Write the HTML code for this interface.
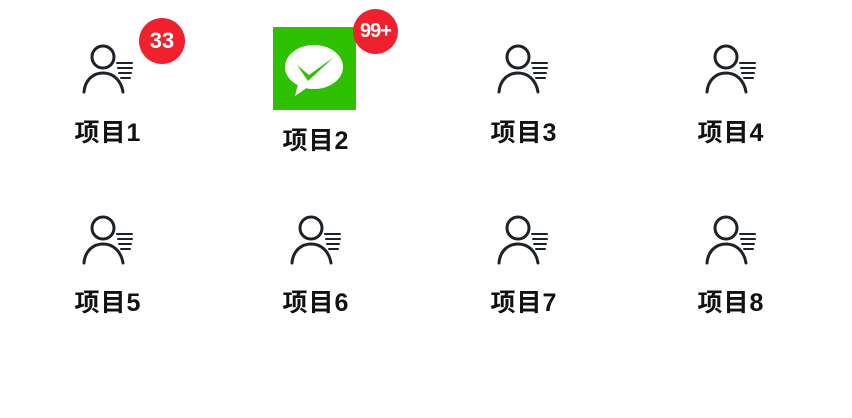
<!DOCTYPE html>
<html><head><meta charset="utf-8"><style>
html,body{margin:0;padding:0;background:#fff;width:852px;height:418px;overflow:hidden;position:relative}
.ic{position:absolute;}
.lbl{position:absolute;width:160px;text-align:center;font-family:"Liberation Sans","Noto Sans CJK SC",sans-serif;font-weight:bold;font-size:25px;letter-spacing:1px;color:#111;line-height:26px}
.badge{position:absolute;border-radius:50%;background:#f0202c;color:#fff;font-family:"Liberation Sans",sans-serif;font-weight:bold;text-align:center}
</style></head><body>
<svg width="0" height="0" style="position:absolute"><defs>
<g id="p" fill="none" stroke="#1d2228" stroke-linecap="round">
<circle cx="21" cy="15" r="11" stroke-width="3"/>
<path d="M2 50 C3 38 11 31 21 31 C31 31 39 38 41 50" stroke-width="3"/>
<path d="M35 21h15M36 26h14M37 31h12M39 36h9" stroke-width="2"/>
</g></defs></svg>

<div class="ic" style="left:82px;top:42px"><svg width="52" height="52"><use href="#p"/></svg></div>
<div class="lbl" style="left:28px;top:120px">项目1</div>
<div class="badge" style="left:139px;top:18px;width:46px;height:46px;line-height:46px;font-size:22px">33</div>

<div class="ic" style="left:273px;top:27px;width:83px;height:83px;background:#2ec100">
<svg width="83" height="83" viewBox="0 0 83 83">
<ellipse cx="41" cy="40" rx="29" ry="22" fill="#fff"/>
<path d="M25 57 L22 69 L35 60 Z" fill="#fff"/>
<path d="M24 38 L36 48 L61 30 L35 54 Z" fill="#2ec100"/>
</svg></div>
<div class="lbl" style="left:236px;top:128px">项目2</div>
<div class="badge" style="left:353px;top:9px;width:45px;height:45px;line-height:45px;font-size:20px;letter-spacing:-1px">99+</div>

<div class="ic" style="left:497px;top:42px"><svg width="52" height="52"><use href="#p"/></svg></div>
<div class="lbl" style="left:444px;top:120px">项目3</div>
<div class="ic" style="left:705px;top:42px"><svg width="52" height="52"><use href="#p"/></svg></div>
<div class="lbl" style="left:651px;top:120px">项目4</div>

<div class="ic" style="left:82px;top:213px"><svg width="52" height="52"><use href="#p"/></svg></div>
<div class="lbl" style="left:28px;top:290px">项目5</div>
<div class="ic" style="left:290px;top:213px"><svg width="52" height="52"><use href="#p"/></svg></div>
<div class="lbl" style="left:236px;top:290px">项目6</div>
<div class="ic" style="left:497px;top:213px"><svg width="52" height="52"><use href="#p"/></svg></div>
<div class="lbl" style="left:444px;top:290px">项目7</div>
<div class="ic" style="left:705px;top:213px"><svg width="52" height="52"><use href="#p"/></svg></div>
<div class="lbl" style="left:651px;top:290px">项目8</div>
</body></html>
